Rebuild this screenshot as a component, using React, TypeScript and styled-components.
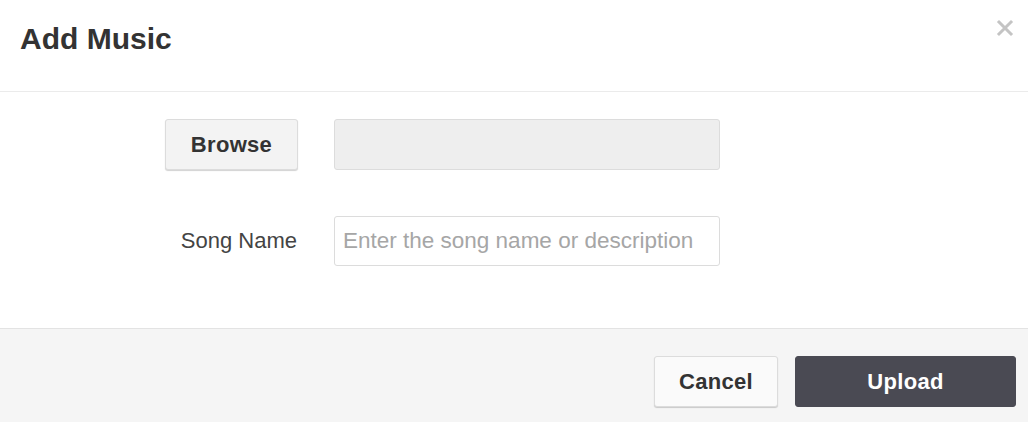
import styled, { createGlobalStyle } from 'styled-components'

const GlobalStyle = createGlobalStyle`
  html, body {
    margin: 0;
    padding: 0;
    background: #fff;
    font-family: "Liberation Sans", Arial, sans-serif;
  }
  * {
    box-sizing: border-box;
  }
`

const Modal = styled.div`
  width: 1028px;
  height: 422px;
  display: flex;
  flex-direction: column;
  background: #fff;
`

const Header = styled.header`
  display: flex;
  justify-content: space-between;
  align-items: flex-start;
  height: 92px;
  padding: 21px 13px 0 20px;
  border-bottom: 1px solid #ebebeb;
`

const Title = styled.h4`
  margin: 0;
  font-size: 30px;
  line-height: 36px;
  font-weight: 700;
  color: #333;
`

const CloseButton = styled.button`
  margin-top: -3px;
  padding: 0;
  border: none;
  background: none;
  width: 20px;
  height: 20px;
  display: flex;
  align-items: center;
  justify-content: center;
  cursor: pointer;
`

const Body = styled.div`
  flex: 1;
  display: grid;
  grid-template-columns: 298px 386px;
  column-gap: 36px;
  row-gap: 46px;
  align-content: start;
  padding-top: 27px;
`

const LabelCell = styled.div`
  display: flex;
  justify-content: flex-end;
  align-items: center;
`

const Label = styled.label`
  font-size: 22px;
  color: #444;
  padding-right: 1px;
`

const Button = styled.button<{ $primary?: boolean; $width: number }>`
  width: ${(p) => p.$width}px;
  height: 51px;
  font-family: "Liberation Sans", Arial, sans-serif;
  font-size: 22px;
  font-weight: 700;
  letter-spacing: 0.3px;
  border-radius: 3px;
  cursor: pointer;
  color: ${(p) => (p.$primary ? '#fff' : '#333')};
  background: ${(p) => (p.$primary ? '#4a4a53' : '#f3f3f3')};
  border: 1px solid ${(p) => (p.$primary ? '#4a4a53' : '#dcdcdc')};
  box-shadow: ${(p) => (p.$primary ? 'none' : '0 1px 1px rgba(0, 0, 0, 0.18)')};
`

const CancelButton = styled(Button)`
  background: #fafafa;
`

const FileField = styled.div`
  height: 51px;
  background: #eee;
  border: 1px solid #dcdcdc;
  border-radius: 3px;
`

const TextInput = styled.input`
  height: 50px;
  width: 100%;
  padding: 0 8px;
  font-family: "Liberation Sans", Arial, sans-serif;
  font-size: 22.5px;
  color: #333;
  background: #fff;
  border: 1px solid #dcdcdc;
  border-radius: 3px;
  outline: none;

  &::placeholder {
    color: #a6a6a6;
  }
`

const Footer = styled.footer`
  height: 94px;
  display: flex;
  justify-content: flex-end;
  align-items: flex-start;
  gap: 17px;
  padding: 27px 12px 0 0;
  background: #f5f5f5;
  border-top: 1px solid #e3e3e3;
`

export default function App() {
  return (
    <>
      <GlobalStyle />
      <Modal>
        <Header>
          <Title>Add Music</Title>
          <CloseButton aria-label="Close">
            <svg width="18" height="18" viewBox="0 0 18 18">
              <path d="M3 3 L15 15 M15 3 L3 15" stroke="#c4c4c4" strokeWidth="3" strokeLinecap="square" />
            </svg>
          </CloseButton>
        </Header>
        <Body>
          <LabelCell>
            <Button $width={133}>Browse</Button>
          </LabelCell>
          <FileField />
          <LabelCell>
            <Label htmlFor="song-name">Song Name</Label>
          </LabelCell>
          <TextInput id="song-name" placeholder="Enter the song name or description" />
        </Body>
        <Footer>
          <CancelButton $width={124}>Cancel</CancelButton>
          <Button $primary $width={221}>Upload</Button>
        </Footer>
      </Modal>
    </>
  )
}
